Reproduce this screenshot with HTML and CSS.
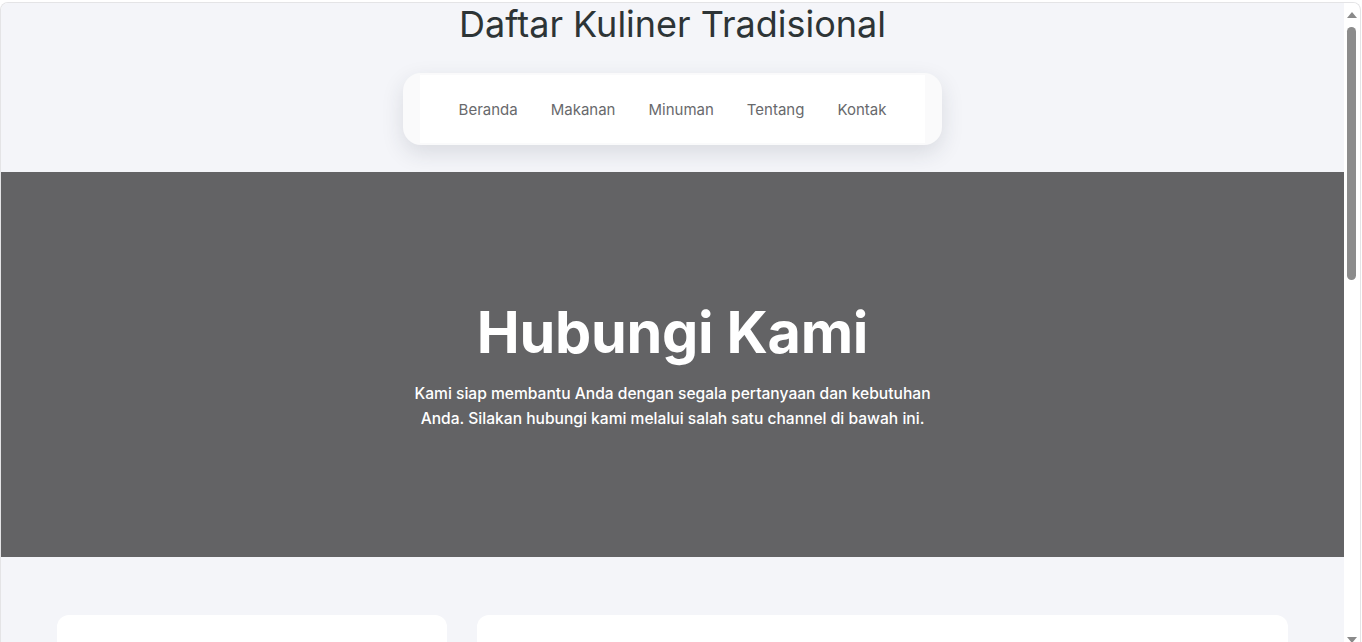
FILE: index.html
```html
<!DOCTYPE html>
<html lang="id">
<head>
<meta charset="utf-8">
<title>Hubungi Kami - Daftar Kuliner Tradisional</title>
<link rel="stylesheet" href="styles.css">
</head>
<body>
<div class="frame">
  <div class="viewport">
    <header class="site-header">
      <h1 class="site-title">Daftar Kuliner Tradisional</h1>
      <nav class="nav-card">
        <ul class="nav-list">
          <li><a href="#" class="nav-link">Beranda</a></li>
          <li><a href="#" class="nav-link">Makanan</a></li>
          <li><a href="#" class="nav-link">Minuman</a></li>
          <li><a href="#" class="nav-link">Tentang</a></li>
          <li><a href="#" class="nav-link">Kontak</a></li>
        </ul>
      </nav>
    </header>
    <section class="hero">
      <div class="hero-inner">
        <h2 class="hero-title">Hubungi Kami</h2>
        <p class="hero-text">Kami siap membantu Anda dengan segala pertanyaan dan kebutuhan Anda. Silakan hubungi kami melalui salah satu channel di bawah ini.</p>
      </div>
    </section>
    <section class="contact">
      <div class="contact-grid">
        <div class="card card-info"></div>
        <div class="card card-form"></div>
      </div>
    </section>
  </div>
  <div class="scrollbar">
    <span class="arrow arrow-up"></span>
    <div class="track"><div class="thumb"></div></div>
    <span class="arrow arrow-down"></span>
  </div>
</div>
</body>
</html>
```

FILE: styles.css
```css
* { box-sizing: border-box; }
html, body { margin: 0; padding: 0; }
body {
  background: #ffffff;
  font-family: Inter, "Noto Sans", "Liberation Sans", sans-serif;
  overflow: hidden;
  height: 642px;
}
.frame {
  margin-top: 2px;
  width: 1361px;
  height: 700px;
  border: 1px solid #e4e4e6;
  border-bottom: none;
  border-radius: 8px 8px 0 0;
  overflow: hidden;
  display: flex;
  background: #ffffff;
}
.viewport {
  width: 1343px;
  flex: 0 0 1343px;
  background: #f4f5f9;
}
.site-header {
  display: flex;
  flex-direction: column;
  align-items: center;
  padding: 0 0 27px;
}
.site-title {
  margin: -1px 0 27px;
  font-size: 36px;
  font-weight: 400;
  line-height: 44px;
  color: #2d3436;
}
.nav-card {
  background: #fafafb;
  border-radius: 18px;
  padding: 2px 17px;
  box-shadow: 0 8px 22px rgba(40, 44, 60, 0.13);
}
.nav-list {
  list-style: none;
  margin: 0;
  padding: 0 22px;
  display: flex;
  background: #ffffff;
  height: 68px;
  align-items: center;
}
.nav-link {
  display: block;
  padding: 8px 16.5px;
  font-size: 15px;
  color: #68696c;
  text-decoration: none;
}
.hero {
  height: 385px;
  background: #636365;
  display: flex;
  align-items: center;
  justify-content: center;
  text-align: center;
  color: #ffffff;
}
.hero-inner {
  display: flex;
  flex-direction: column;
  align-items: center;
}
.hero-title {
  margin: 0 0 14px;
  font-size: 57.5px;
  font-weight: 700;
  line-height: 1.2;
  letter-spacing: -0.3px;
}
.hero-text {
  margin: 0;
  max-width: 540px;
  font-size: 15.6px;
  font-weight: 500;
  line-height: 25px;
}
.contact {
  padding: 58px 56px 0;
}
.contact-grid {
  display: grid;
  grid-template-columns: 390px 1fr;
  gap: 30px;
}
.card {
  background: #ffffff;
  border-radius: 12px;
  height: 300px;
}
.scrollbar {
  flex: 0 0 15px;
  width: 15px;
  background: #ffffff;
  display: flex;
  flex-direction: column;
  align-items: center;
  height: 640px;
  padding-top: 9px;
}
.arrow {
  width: 0;
  height: 0;
  border-left: 5px solid transparent;
  border-right: 5px solid transparent;
}
.arrow-up {
  border-bottom: 6px solid #8a8a8a;
}
.arrow-down {
  border-top: 6px solid #8a8a8a;
}
.track {
  flex: 1;
  width: 100%;
  padding: 9px 3px;
  display: flex;
  justify-content: center;
}
.thumb {
  width: 9px;
  height: 253px;
  background: #8c8c8c;
  border-radius: 5px;
}
```
